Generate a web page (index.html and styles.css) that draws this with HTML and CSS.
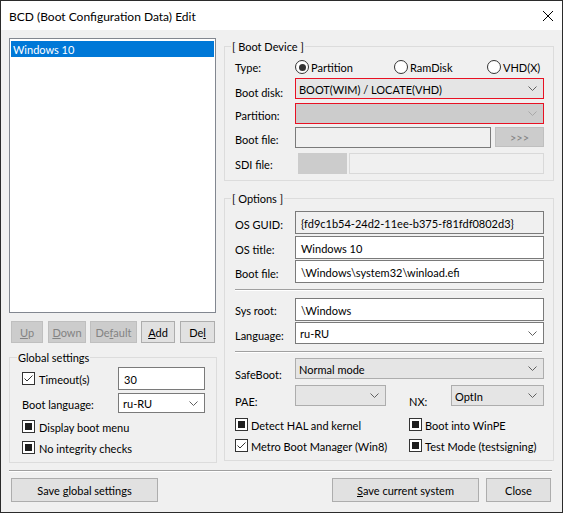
FILE: index.html
```html
<!DOCTYPE html>
<html>
<head>
<meta charset="utf-8">
<title>BCD Edit</title>
<link rel="stylesheet" href="styles.css">
</head>
<body>
<div class="window">
  <div class="titlebar">
    <span class="title">BCD (Boot Configuration Data) Edit</span>
    <svg class="close" width="10" height="10" viewBox="0 0 10 10"><path d="M0 0L10 10M10 0L0 10" stroke="#000" stroke-width="1"/></svg>
  </div>
  <div class="main">
    <div class="columns">
      <div class="left">
        <div class="listbox">
          <div class="item sel">Windows 10</div>
        </div>
        <div class="btnrow">
          <button class="btn dis b-up"><span><u>U</u>p</span></button>
          <button class="btn dis b-down"><span><u>D</u>own</span></button>
          <button class="btn dis b-def"><span>De<u>f</u>ault</span></button>
          <button class="btn b-add"><span><u>A</u>dd</span></button>
          <button class="btn b-del"><span>De<u>l</u></span></button>
        </div>
        <div class="group g-global">
          <span class="gtitle gt-left">Global settings</span>
          <div class="grow r-timeout">
            <div class="chk w-timeout"><span class="cb on"><svg width="11" height="11" viewBox="0 0 11 11"><path d="M1.5 5.5L4 8L9.5 2.5" fill="none" stroke="#333" stroke-width="1"/></svg></span><span class="ctext">Timeout(s)</span></div>
            <div class="field w-edit"><span class="ftext">30</span></div>
          </div>
          <div class="grow r-lang">
            <span class="glbl">Boot language:</span>
            <div class="field combo-edit w-edit"><span class="ftext">ru-RU</span><svg class="chev" width="9" height="5" viewBox="0 0 9 5"><path d="M0.5 0.5L4.5 4.5L8.5 0.5" fill="none" stroke="#606060"/></svg></div>
          </div>
          <div class="grow r-chk1">
            <div class="chk"><span class="cb ind"></span><span class="ctext">Display boot menu</span></div>
          </div>
          <div class="grow r-chk2">
            <div class="chk"><span class="cb ind"></span><span class="ctext">No integrity checks</span></div>
          </div>
        </div>
      </div>
      <div class="right">
        <div class="group g-boot">
          <span class="gtitle gt-right">[ Boot Device ]</span>
          <div class="frow r-type">
            <span class="lbl">Type:</span>
            <div class="radio w-part"><span class="rb on"></span><span>Partition</span></div>
            <div class="radio w-ram"><span class="rb"></span><span>RamDisk</span></div>
            <div class="radio"><span class="rb"></span><span>VHD(X)</span></div>
          </div>
          <div class="frow r-bootdisk">
            <span class="lbl off3">Boot disk:</span>
            <div class="field combo red"><span class="ftext">BOOT(WIM) / LOCATE(VHD)</span><svg class="chev" width="9" height="5" viewBox="0 0 9 5"><path d="M0.5 0.5L4.5 4.5L8.5 0.5" fill="none" stroke="#606060"/></svg></div>
          </div>
          <div class="frow r-part">
            <span class="lbl off1">Partition:</span>
            <div class="field combo red disabled"><span class="ftext"></span><svg class="chev" width="9" height="5" viewBox="0 0 9 5"><path d="M0.5 0.5L4.5 4.5L8.5 0.5" fill="none" stroke="#a8a8a8"/></svg></div>
          </div>
          <div class="frow r-bfile">
            <span class="lbl off1">Boot file:</span>
            <div class="field ro w-bfile"></div>
            <button class="btn dis b-more"><span>&gt;&gt;&gt;</span></button>
          </div>
          <div class="frow r-sdi">
            <span class="lbl">SDI file:</span>
            <div class="graybox"></div>
            <div class="field dis-edit w-sdi"></div>
          </div>
        </div>
        <div class="group g-opt">
          <span class="gtitle gt-right">[ Options ]</span>
          <div class="frow r-guid">
            <span class="lbl off1">OS GUID:</span>
            <div class="field ro"><span class="ftext">{fd9c1b54-24d2-11ee-b375-f81fdf0802d3}</span></div>
          </div>
          <div class="frow r-title">
            <span class="lbl off1">OS title:</span>
            <div class="field"><span class="ftext">Windows 10</span></div>
          </div>
          <div class="frow r-ofile">
            <span class="lbl off1">Boot file:</span>
            <div class="field"><span class="ftext">\Windows\system32\winload.efi</span></div>
          </div>
          <div class="hsep s1"></div>
          <div class="frow r-sys">
            <span class="lbl">Sys root:</span>
            <div class="field"><span class="ftext">\Windows</span></div>
          </div>
          <div class="frow r-olang">
            <span class="lbl off2">Language:</span>
            <div class="field combo-edit"><span class="ftext">ru-RU</span><svg class="chev" width="9" height="5" viewBox="0 0 9 5"><path d="M0.5 0.5L4.5 4.5L8.5 0.5" fill="none" stroke="#606060"/></svg></div>
          </div>
          <div class="hsep s2"></div>
          <div class="frow r-safe">
            <span class="lbl off5">SafeBoot:</span>
            <div class="field combo"><span class="ftext">Normal mode</span><svg class="chev" width="9" height="5" viewBox="0 0 9 5"><path d="M0.5 0.5L4.5 4.5L8.5 0.5" fill="none" stroke="#606060"/></svg></div>
          </div>
          <div class="frow r-pae">
            <span class="lbl off5">PAE:</span>
            <div class="field combo w-pae"><span class="ftext"></span><svg class="chev" width="9" height="5" viewBox="0 0 9 5"><path d="M0.5 0.5L4.5 4.5L8.5 0.5" fill="none" stroke="#606060"/></svg></div>
            <span class="lbl off5 lbl-nx">NX:</span>
            <div class="field combo w-nx"><span class="ftext">OptIn</span><svg class="chev" width="9" height="5" viewBox="0 0 9 5"><path d="M0.5 0.5L4.5 4.5L8.5 0.5" fill="none" stroke="#606060"/></svg></div>
          </div>
          <div class="frow r-c1">
            <div class="chk w-ocol"><span class="cb ind"></span><span class="ctext">Detect HAL and kernel</span></div>
            <div class="chk"><span class="cb ind"></span><span class="ctext">Boot into WinPE</span></div>
          </div>
          <div class="frow r-c2">
            <div class="chk w-ocol"><span class="cb on"><svg width="11" height="11" viewBox="0 0 11 11"><path d="M1.5 5.5L4 8L9.5 2.5" fill="none" stroke="#333" stroke-width="1"/></svg></span><span class="ctext">Metro Boot Manager (Win8)</span></div>
            <div class="chk"><span class="cb ind"></span><span class="ctext">Test Mode (testsigning)</span></div>
          </div>
        </div>
      </div>
    </div>
    <div class="hsep bottomsep"></div>
    <div class="bottom">
      <button class="btn b-saveg"><span>Save <u>g</u>lobal settings</span></button>
      <button class="btn b-savec"><span><u>S</u>ave current system</span></button>
      <button class="btn b-close"><span>Close</span></button>
    </div>
  </div>
</div>
</body>
</html>
```

FILE: styles.css
```css
* { box-sizing: border-box; }
body {
  margin: 0;
  font-family: Lato, "Liberation Sans", sans-serif;
  font-size: 11px;
  color: #000;
  background: #fff;
}
.window {
  width: 563px;
  height: 513px;
  border: 1px solid #2b2b2b;
  background: #f0f0f0;
  display: flex;
  flex-direction: column;
}
.titlebar {
  flex: none;
  height: 29px;
  background: #fff;
  display: flex;
  align-items: center;
  padding-left: 8px;
}
.title { font-size: 12px; padding-top: 2px; }
.close { margin-left: auto; margin-right: 9px; }
.main {
  flex: 1;
  display: flex;
  flex-direction: column;
  padding: 8px 8px 0 8px;
}
.columns { display: flex; gap: 8px; align-items: flex-start; }
.left { width: 207px; flex: none; }
.right { width: 330px; flex: none; }

.listbox {
  height: 275px;
  border: 1px solid #828790;
  background: #fff;
  padding: 2px 1px 1px;
}
.item { height: 16px; line-height: 17px; padding-left: 2px; }
.item.sel { background: #0078d7; color: #fff; }

.btn {
  font: inherit;
  color: #000;
  padding: 0;
  border: 1px solid #adadad;
  background: #e1e1e1;
  display: flex;
  align-items: center;
  justify-content: center;
  flex: none;
  white-space: nowrap;
}
.btn span { padding-top: 1px; }
.btn.dis { border-color: #bfbfbf; background: #cccccc; color: #838383; }
.btnrow { display: flex; margin-top: 8px; height: 22px; }
.btnrow .btn { height: 22px; }
.b-up { margin-left: 2px; width: 32px; }
.b-down { margin-left: 5px; width: 38px; }
.b-def { margin-left: 4px; width: 47px; }
.b-add { margin-left: 4px; width: 34px; }
.b-del { margin-left: 5px; width: 35px; }

.group { position: relative; border: 1px solid #dcdcdc; }
.gtitle {
  position: absolute;
  top: -8px;
  padding: 0 1px;
  line-height: 15px;
  background: #f0f0f0;
  white-space: nowrap;
}
.gt-left { left: 7px; }
.gt-right { left: 6px; }

.g-global {
  width: 208px;
  margin-top: 14px;
  padding: 9px 11px 7px 12px;
}
.grow { display: flex; align-items: center; }
.r-timeout { height: 23px; }
.r-lang { height: 20px; margin-top: 3px; }
.r-chk1 { height: 16px; margin-top: 5px; }
.r-chk2 { height: 16px; margin-top: 5px; }
.w-timeout { width: 96px; flex: none; }
.w-edit { width: 87px; flex: none; }
.glbl { width: 96px; flex: none; white-space: nowrap; padding-top: 3px; }

.chk { display: flex; align-items: center; white-space: nowrap; }
.cb {
  width: 13px;
  height: 13px;
  flex: none;
  border: 1px solid #333;
  background: #fff;
  display: flex;
  align-items: center;
  justify-content: center;
}
.cb.ind::after { content: ""; width: 7px; height: 7px; background: #1e1e1e; }
.ctext { margin-left: 3px; padding-top: 2px; }
.g-global .ctext { margin-left: 4px; }

.radio { display: flex; align-items: center; white-space: nowrap; }
.radio span + span { padding-top: 1px; }
.rb {
  width: 14px;
  height: 14px;
  border: 1px solid #333;
  border-radius: 50%;
  background: #fff;
  margin-right: 2px;
  display: flex;
  align-items: center;
  justify-content: center;
  flex: none;
}
.rb.on::after { content: ""; width: 7px; height: 7px; border-radius: 50%; background: #333; }
.w-part { width: 99px; flex: none; }
.w-ram { width: 93px; flex: none; }

.field {
  flex: 1;
  height: 100%;
  border: 1px solid #7a7a7a;
  background: #fff;
  display: flex;
  align-items: center;
  padding-left: 5px;
  white-space: nowrap;
  overflow: hidden;
}
.ftext { flex: 1; padding-top: 1px; }
.chev { flex: none; margin-right: 6px; }
.combo { background: #e5e5e5; border-color: #adadad; padding-left: 3px; }
.combo-edit { padding-left: 4px; }
.combo.red { border-color: #e81123; }
.combo.disabled { background: #cccccc; }
.ro { background: #f0f0f0; }
.dis-edit { background: #f0f0f0; border-color: #d9d9d9; }

.g-boot { margin-top: 8px; padding: 10px 9px 6px 10px; }
.frow { display: flex; align-items: center; }
.lbl { width: 60px; flex: none; white-space: nowrap; padding-top: 1px; }
.off1 { padding-top: 3px; }
.off2 { padding-top: 5px; }
.off3 { padding-top: 7px; }
.off5 { padding-top: 11px; }

.r-type { height: 20px; }
.r-bootdisk { height: 21px; margin-top: 1px; }
.r-part { height: 21px; margin-top: 4px; }
.r-bfile { height: 21px; margin-top: 3px; }
.r-sdi { height: 21px; margin-top: 5px; }
.w-bfile { flex: none; width: 196px; }
.b-more { width: 49px; height: 20px; margin-left: 4px; align-self: flex-start; color: #a0a0a0; }
.graybox { width: 49px; height: 100%; margin-left: 3px; background: #cccccc; flex: none; }
.w-sdi { flex: none; width: 195px; margin-left: 2px; }

.g-opt { margin-top: 17px; padding: 12px 9px 7px 10px; }
.r-guid { height: 23px; }
.r-title { height: 23px; margin-top: 2px; }
.r-ofile { height: 23px; margin-top: 1px; }
.hsep { height: 2px; border-top: 1px solid #a0a0a0; border-bottom: 1px solid #fff; margin-right: 2px; }
.s1 { margin-top: 6px; }
.r-sys { height: 23px; margin-top: 7px; }
.r-olang { height: 22px; margin-top: 1px; }
.s2 { margin-top: 7px; }
.r-safe { height: 21px; margin-top: 5px; }
.r-pae { height: 21px; margin-top: 6px; }
.w-pae { flex: none; width: 91px; }
.lbl-nx { width: 42px; margin-left: 23px; }
.w-nx { flex: none; width: 93px; }
.r-c1 { height: 16px; margin-top: 10px; }
.r-c2 { height: 16px; margin-top: 5px; }
.w-ocol { width: 174px; flex: none; }

.bottomsep { margin-top: 7px; }
.bottom { display: flex; height: 24px; margin-top: 6px; }
.bottom .btn { height: 24px; }
.b-saveg { margin-left: 2px; width: 147px; }
.b-savec { margin-left: auto; width: 147px; }
.b-close { margin-left: 7px; width: 65px; margin-right: 3px; }
```
